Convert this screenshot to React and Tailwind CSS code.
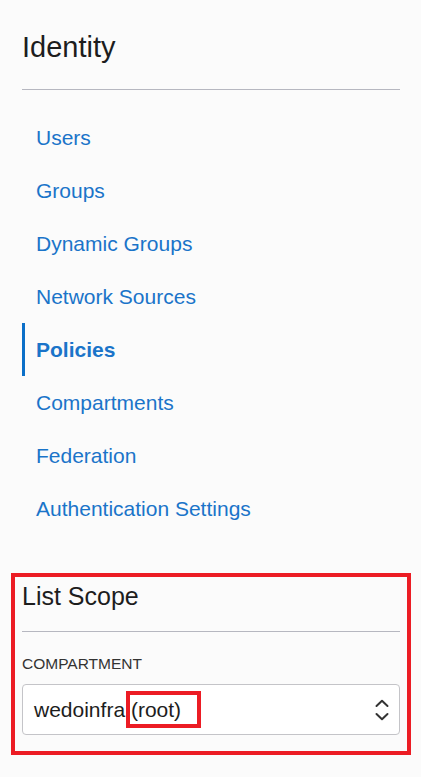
import React from 'react';

const NAV_ITEMS = [
  'Users',
  'Groups',
  'Dynamic Groups',
  'Network Sources',
  'Policies',
  'Compartments',
  'Federation',
  'Authentication Settings',
];

const ACTIVE = 'Policies';

function ChevronsUpDown() {
  return (
    <svg width="14" height="22" viewBox="0 0 14 22" fill="none" stroke="#333" strokeWidth="2" strokeLinecap="round" strokeLinejoin="round">
      <polyline points="1.5,7 7,1.8 12.5,7" />
      <polyline points="1.5,15 7,20.2 12.5,15" />
    </svg>
  );
}

export default function App() {
  return (
    <div className="min-h-screen w-full bg-[#fbfbfb] font-['Liberation_Sans',Arial,sans-serif]">
      {/* Header */}
      <div className="px-[22px] pt-[31px]">
        <h1 className="text-[29px] leading-[33px] text-[#1d1d1d] font-normal">Identity</h1>
        <div className="mt-[25px] h-px w-[378px] bg-[#b6b7c0]" />
      </div>

      {/* Nav */}
      <nav className="mt-[21px] px-[22px]">
        {NAV_ITEMS.map((item) => {
          const active = item === ACTIVE;
          return (
            <div
              key={item}
              className={`h-[53px] flex items-center pl-[11px] border-l-[3px] ${active ? 'border-[#0b6fc8]' : 'border-transparent'}`}
            >
              <span className={`text-[21px] leading-[24px] text-[#1a74c9] ${active ? 'font-bold' : 'font-normal'}`}>
                {item}
              </span>
            </div>
          );
        })}
      </nav>

      {/* List Scope */}
      <div className="mt-[38px] mx-[11px] w-[400px] border-4 border-[#ec1c24] px-[7px] pt-[5px] pb-[16px]">
        <h2 className="text-[25px] leading-[29px] text-[#1d1d1d] font-normal">List Scope</h2>
        <div className="mt-[20px] h-px w-full bg-[#b6b7c0]" />
        <div className="mt-[23px] text-[15.5px] leading-[17px] text-[#333] uppercase">Compartment</div>
        <div className="mt-[12px] h-[51px] w-full rounded-[4px] border border-[#c4c4c8] bg-white flex items-center justify-between pl-[11px] pr-[10px]">
          <span className="text-[21px] leading-[24px] text-[#1d1d1d]">
            wedoinfra{' '}
            <span className="relative">
              (root)
              <span className="absolute left-[-5px] right-[-20px] top-[-7px] bottom-[-7px] border-4 border-[#ec1c24]" />
            </span>
          </span>
          <ChevronsUpDown />
        </div>
      </div>
    </div>
  );
}
